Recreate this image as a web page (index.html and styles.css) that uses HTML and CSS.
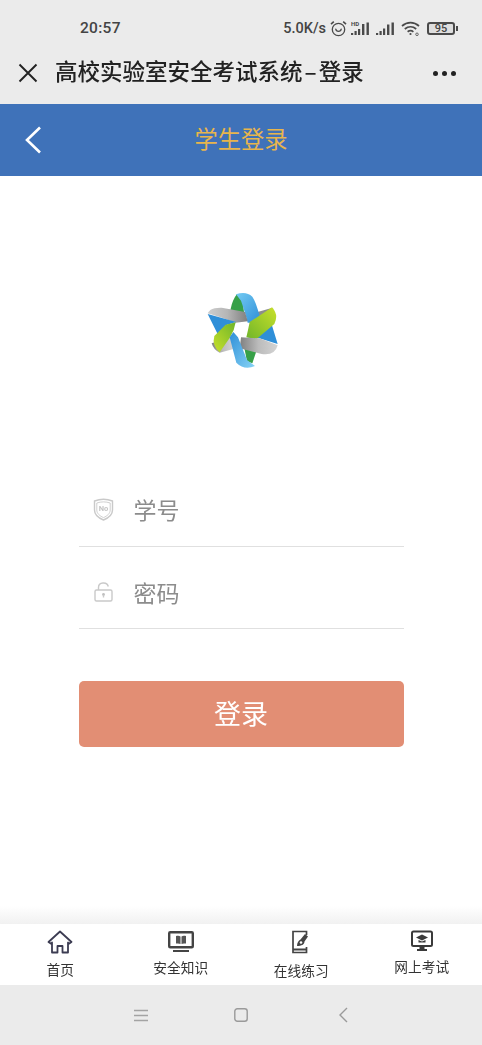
FILE: index.html
```html
<!DOCTYPE html>
<html lang="zh-CN">
<head>
<meta charset="utf-8">
<title>学生登录</title>
<link rel="stylesheet" href="styles.css">
</head>
<body>
<div class="phone">
  <div class="status">
    <span class="time">20:57</span>
    <div class="status-right">
      <span class="speed">5.0K/s</span>
      <svg class="ic-alarm" width="17" height="17" viewBox="0 0 17 17" fill="none" stroke="#4a4a4a" stroke-width="1.300"><circle cx="8.500" cy="9.500" r="6.200"/><path d="M5.800 9.200c.5 2.800 4.900 2.800 5.400 0" stroke-linecap="round"/><path d="M1 4.200 3.800 1.600M16 4.200l-2.800-2.600" stroke-width="1.600"/></svg>
      <svg class="ic-hd" width="19" height="15" viewBox="0 0 19 15"><text x="0" y="5" class="hd-text">HD</text><g fill="#4a4a4a"><rect x="0" y="12" width="2.200" height="2"/><rect x="3.500" y="10" width="2.200" height="4"/><rect x="7" y="8" width="2.200" height="6"/><rect x="11" y="3" width="2.400" height="11"/><rect x="15.500" y="1.500" width="2.400" height="12.500"/></g></svg>
      <svg class="ic-signal" width="19" height="13" viewBox="0 0 19 13" fill="#4a4a4a"><rect x="0" y="11" width="2.200" height="2"/><rect x="3.500" y="9" width="2.200" height="4"/><rect x="7" y="6.500" width="2.200" height="6.500"/><rect x="11" y="2.500" width="2.400" height="10.500"/><rect x="15.500" y="0.500" width="2.400" height="12.500"/></svg>
      <svg class="ic-wifi" width="20" height="15" viewBox="0 0 20 15" fill="none" stroke="#4a4a4a" stroke-width="1.700"><path d="M1 5c5-4.600 12-4.600 17 0"/><path d="M3.800 8c3.500-3 8-3 11.400 0"/><path d="M6.600 10.800c2-1.500 3.900-1.500 5.800 0"/><circle cx="9.500" cy="13" r="1.100" fill="#4a4a4a" stroke="none"/><circle cx="16" cy="13.300" r="1.300" stroke-width=".8"/></svg>
      <div class="battery"><span class="battery-level">95</span></div>
      <span class="battery-tip"></span>
    </div>
  </div>

  <div class="wx-bar">
    <svg class="wx-close" width="20" height="20" viewBox="0 0 20 20" stroke="#222" stroke-width="1.900" fill="none"><path d="M1.500 1.500 18.500 18.500M18.500 1.500 1.500 18.500"/></svg>
    <span class="wx-title">高校实验室安全考试系统<span class="wx-dash">–</span>登录</span>
    <div class="wx-more"><i></i><i></i><i></i></div>
  </div>

  <header class="head">
    <svg class="head-back" width="18" height="28" viewBox="0 0 18 28" fill="none" stroke="#fff" stroke-width="2.600"><path d="M16 1.500 3 14l13 12.500"/></svg>
    <h1 class="head-title">学生登录</h1>
  </header>

  <main class="content">
    <svg class="logo" width="100" height="100" viewBox="0 0 300 300">
      <defs>
        <linearGradient id="gb" x1="0" y1="0" x2="1" y2="1"><stop offset="0" stop-color="#74cbf3"/><stop offset="1" stop-color="#2f8fd8"/></linearGradient>
        <linearGradient id="gb2" x1="0" y1="0" x2="1" y2="1"><stop offset="0" stop-color="#2f8fd8"/><stop offset="1" stop-color="#86d3f5"/></linearGradient>
        <linearGradient id="gl" x1="0" y1="1" x2="1" y2="0"><stop offset="0" stop-color="#c8e02a"/><stop offset="1" stop-color="#6fb52a"/></linearGradient>
        <linearGradient id="gl2" x1="0" y1="1" x2="1" y2="0"><stop offset="0" stop-color="#6fb52a"/><stop offset="1" stop-color="#c8e02a"/></linearGradient>
        <linearGradient id="gg" x1="0" y1="0" x2="1" y2="0"><stop offset="0" stop-color="#cfcfcf"/><stop offset=".5" stop-color="#b5b5b5"/><stop offset="1" stop-color="#7f7f7f"/></linearGradient>
        <linearGradient id="gg2" x1="0" y1="0" x2="1" y2="0"><stop offset="0" stop-color="#7f7f7f"/><stop offset=".5" stop-color="#bcbcbc"/><stop offset="1" stop-color="#d4d4d4"/></linearGradient>
      </defs>
      <path d="M138 42 Q122 62 117 98 L160 104 L155 62 Z" fill="#37a048"/>
      <path d="M186 100 L242 84 L236 120 L205 116 Z" fill="#8d8d8d"/>
      <path d="M205 110 L238 120 L260 192 L205 175 L170 172 Z" fill="#2f8fd8"/>
      <path d="M135 43 Q165 32 184 50 Q194 64 206 108 L190 128 L170 128 Q160 90 150 62 Z" fill="url(#gb)"/>
      <path d="M50 100 Q58 82 92 83 L162 96 L170 124 L134 128 Q90 112 50 100 Z" fill="url(#gg)"/>
      <path d="M50 102 L136 126 L104 136 L84 170 Z" fill="#2f8fd8"/>
      <path d="M62 190 L118 170 L130 206 L86 218 Q68 210 62 190 Z" fill="url(#gg2)"/>
      <path d="M134 127 L128 150 L116 174 L86 217 Q62 196 70 168 L104 134 Z" fill="url(#gl)"/>
      <path d="M243 82 Q264 104 250 132 L196 178 L166 172 L171 150 L176 126 Z" fill="url(#gl2)"/>
      <path d="M160 204 L198 208 L184 250 L168 244 Z" fill="#37a048"/>
      <path d="M150 172 L206 175 L260 196 Q252 228 212 222 L146 205 Z" fill="url(#gg2)"/>
      <path d="M116 172 L127 156 L141 172 L168 240 L192 258 Q160 272 136 248 Z" fill="url(#gb2)"/>
    </svg>

    <form class="form">
      <label class="field">
        <svg class="field-ic" width="21" height="23" viewBox="0 0 21 23" fill="none" stroke="#c9c9c9" stroke-width="1.400"><path d="M1.500 3c6-2.300 12-2.300 18 0v9c0 4.500-4 8-9 10-5-2-9-5.500-9-10z"/><path d="M3.800 5c4.500-1.500 9-1.500 13.400 0v7c0 3.500-3 6-6.700 7.600C6.800 18 3.800 15.500 3.800 12z" stroke-width=".9"/><text x="10.500" y="12.800" class="no-text">No</text></svg>
        <span class="field-label">学号</span>
      </label>
      <label class="field">
        <svg class="field-ic" width="21" height="21" viewBox="0 0 21 21" fill="none" stroke="#c9c9c9" stroke-width="1.400"><rect x="2" y="9" width="17" height="11" rx="1.500"/><path d="M5.500 9V6.500c0-5.500 8.500-6 9.800-1"/><circle cx="10.500" cy="13.500" r="1.400" fill="#c0c0c0" stroke="none"/><path d="M10.500 14v2.500"/></svg>
        <span class="field-label">密码</span>
      </label>
      <button class="submit" type="button">登录</button>
    </form>
  </main>

  <nav class="tabs">
    <a class="tab tab-low">
      <svg width="26" height="24" viewBox="0 0 26 24" fill="none" stroke="#3c3c52" stroke-width="1.800" stroke-linejoin="round"><path d="M1.500 12 13 1.500 24.500 12l-3 2-.5-1.500V22.500h-5.500V16h-5v6.500H5V12.500L4.500 14z"/></svg>
      <span>首页</span>
    </a>
    <a class="tab">
      <svg width="26" height="22" viewBox="0 0 26 22"><rect x="1.200" y="1.200" width="23.600" height="15" rx="1" fill="none" stroke="#444" stroke-width="2.400"/><path d="M8 5c2-.5 3.500-.3 4.500.4V13c-1-.6-2.500-.8-4.500-.4zM18 5c-2-.5-3.500-.3-4.500.4V13c1-.6 2.500-.8 4.500-.4z" fill="#555"/><rect x="5" y="19" width="16" height="2" fill="#444"/></svg>
      <span>安全知识</span>
    </a>
    <a class="tab tab-low">
      <svg width="20" height="24" viewBox="0 0 20 24" fill="none" stroke="#444" stroke-width="1.700"><path d="M15.500 5V1.500H2v21h13.500V17"/><path d="M2 19.500h13.500" stroke-width="2"/><path d="M6 16c0-3 1.500-5.500 3.500-6.500L14 4l3 2.500-3.500 5c0 3-3 4.500-7.500 4.500z" fill="#444" stroke="none"/><circle cx="10" cy="12.500" r="1.300" fill="#fff" stroke="none"/></svg>
      <span>在线练习</span>
    </a>
    <a class="tab tab-top">
      <svg width="22" height="21" viewBox="0 0 22 21"><rect x="1" y="1" width="20" height="14.500" rx="1.500" fill="#fff" stroke="#3a3a3a" stroke-width="2"/><path d="M11 4 17 7l-6 3-6-3z" fill="#3a3a3a"/><path d="M7.500 9.500v2.500h7V9.500L11 11z" fill="#3a3a3a"/><rect x="8.500" y="15.500" width="5" height="3" fill="#3a3a3a"/><rect x="6" y="18.500" width="10" height="2" fill="#3a3a3a"/></svg>
      <span>网上考试</span>
    </a>
  </nav>

  <div class="sysbar">
    <svg width="14" height="13" viewBox="0 0 14 13" stroke="#a3a3a3" stroke-width="1.300"><path d="M0 1.500h14M0 6.500h14M0 11.500h14"/></svg>
    <svg width="14" height="14" viewBox="0 0 14 14" fill="none" stroke="#9a9a9a" stroke-width="1.400"><rect x=".8" y=".8" width="12.400" height="12.400" rx="2.500"/></svg>
    <svg class="sys-back" width="10" height="16" viewBox="0 0 10 16" fill="none" stroke="#9a9a9a" stroke-width="1.400"><path d="M9 1 2 8l7 7"/></svg>
  </div>
</div>
</body>
</html>
```

FILE: styles.css
```css
* { box-sizing: border-box; }
html, body { margin: 0; padding: 0; }
body {
  background: #fff;
  font-family: "Noto Sans CJK SC", "Noto Sans", sans-serif;
}
.phone {
  width: 482px;
  height: 1045px;
  display: flex;
  flex-direction: column;
  overflow: hidden;
  filter: blur(0.55px);
}
.status {
  height: 47px;
  flex: none;
  background: #ebebeb;
  display: flex;
  align-items: center;
  padding: 9px 24px 0 80px;
  color: #444;
  font-family: Roboto, sans-serif;
}
.time { font-size: 15.500px; font-weight: 500; letter-spacing: .3px; }
.status-right { margin-left: auto; display: flex; align-items: center; }
.speed { font-size: 14.500px; font-weight: 500; margin-right: 4px; }
.ic-hd { margin-left: 4px; }
.ic-signal { margin-left: 6px; }
.ic-wifi { margin-left: 6px; }
.hd-text { font: 700 6px Roboto, sans-serif; fill: #4a4a4a; }
.battery {
  margin-left: 6px;
  width: 28px;
  height: 13px;
  border: 2px solid #4a4a4a;
  border-radius: 3px;
  display: flex;
  align-items: center;
  justify-content: center;
  background: #dedede;
}
.battery-level { font-size: 11px; font-weight: 500; line-height: 1; }
.battery-tip { width: 2px; height: 5px; background: #4a4a4a; margin-left: 1px; }
.wx-bar {
  height: 57px;
  flex: none;
  background: #ebebeb;
  display: flex;
  align-items: center;
  padding: 0 26px 5px 18px;
}
.wx-title {
  margin: 0 0 6px 17px;
  font-size: 22.500px;
  font-weight: 500;
  color: #222;
  white-space: nowrap;
}
.wx-dash { margin: 0 2px; }
.wx-more { margin-left: auto; display: flex; gap: 4px; }
.wx-more i { width: 5px; height: 5px; border-radius: 50%; background: #222; display: block; }
.head {
  height: 72px;
  flex: none;
  background: #3f72b9;
  position: relative;
  display: flex;
  align-items: center;
  justify-content: center;
}
.head-back { position: absolute; left: 24px; top: 22px; }
.head-title {
  margin: 0 0 4px;
  font-size: 23.300px;
  font-weight: 400;
  color: #e8b54c;
}
.content {
  flex: 1;
  display: flex;
  flex-direction: column;
  align-items: center;
  background: linear-gradient(to bottom, #fff calc(100% - 18px), #f1f1f1);
  padding-top: 104px;
}
.logo { display: block; flex: none; }
.form {
  align-self: stretch;
  margin: 84px 78.500px 0;
}
.field {
  height: 82.500px;
  display: flex;
  align-items: center;
  border-bottom: 1.500px solid #e0e0e0;
  padding-left: 14px;
  padding-top: 9px;
}
.field-ic { flex: none; width: 21px; }
.field-label {
  margin-left: 20px;
  font-size: 23px;
  color: #8c8c8c;
}
.submit {
  display: block;
  width: 100%;
  height: 66px;
  margin-top: 52px;
  padding: 0 0 4px;
  border: 0;
  border-radius: 5px;
  background: #e28e74;
  color: #fff;
  font: 400 27px "Noto Sans CJK SC", sans-serif;
}
.tabs {
  height: 61px;
  flex: none;
  background: #fff;
  display: grid;
  grid-template-columns: repeat(4, 1fr);
}
.tab {
  display: flex;
  flex-direction: column;
  align-items: center;
  padding-top: 6px;
  color: #333;
  font-size: 13.700px;
  line-height: 20px;
}
.tab svg { display: block; height: 24px; }
.tab span { margin-top: 3px; }
.tab-low span { margin-top: 5px; }
.tab-top { padding-top: 5px; }
.tab-low:nth-child(3) span { margin-top: 6px; }
.sysbar {
  height: 60px;
  flex: none;
  background: #ebebeb;
  display: flex;
  align-items: center;
  padding-left: 134px;
  gap: 86px;
}
.sys-back { margin-left: 4px; }
.no-text { font: 700 7.500px Roboto, sans-serif; fill: #c4c4c4; stroke: none; text-anchor: middle; }
```
